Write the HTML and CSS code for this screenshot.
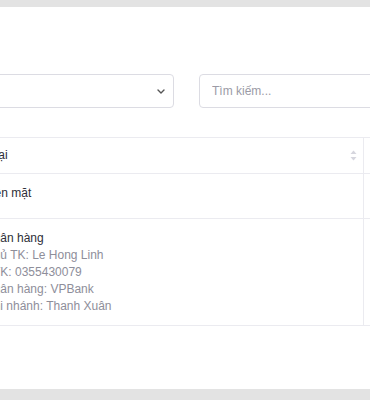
FILE: index.html
```html
<!DOCTYPE html>
<html lang="vi">
<head>
    <meta charset="UTF-8">
    <meta name="viewport" content="width=device-width, initial-scale=1.0">
    <title>Phương thức thanh toán</title>
    <link rel="stylesheet" href="styles.css">
</head>
<body>

  <div class="page">
    <div class="card">

      <div class="filters">
        <div class="select">
          <span class="select-value"></span>
          <svg class="chevron" width="8" height="5" viewBox="0 0 8 5">
            <path d="M1 1l3 3 3-3" fill="none" stroke="#555" stroke-width="1.4" stroke-linecap="round" stroke-linejoin="round"/>
          </svg>
        </div>
        <input class="search" type="text" placeholder="Tìm kiếm...">
      </div>

      <table class="list">
        <thead>
          <tr>
            <th class="col-type">
              <div class="th-inner">
                <span>Loại</span>
                <svg class="sort" width="7" height="11" viewBox="0 0 7 11">
                  <path d="M3.5 0.5L6.5 4H0.5z" fill="#d6d6de"/>
                  <path d="M3.5 10.5L6.5 7H0.5z" fill="#d6d6de"/>
                </svg>
              </div>
            </th>
            <th class="col-rest"></th>
          </tr>
        </thead>
        <tbody>
          <tr class="row-short">
            <td class="col-type"><div class="title">Tiền mặt</div></td>
            <td class="col-rest"></td>
          </tr>
          <tr>
            <td class="col-type">
              <div class="title">Ngân hàng</div>
              <div class="meta">Chủ TK: Le Hong Linh</div>
              <div class="meta">STK: 0355430079</div>
              <div class="meta">Ngân hàng: VPBank</div>
              <div class="meta">Chi nhánh: Thanh Xuân</div>
            </td>
            <td class="col-rest"></td>
          </tr>
        </tbody>
      </table>

    </div>
  </div>

</body>
</html>
```

FILE: styles.css
```css
body, html {
    margin: 0;
    padding: 0;
  }

  body {
    background: #e3e3e3;
    overflow: hidden;
    font-family: "Liberation Sans", Arial, sans-serif;
    font-size: 12px;
    color: #2e2e38;
  }

  .page {
    padding: 7px 0 11px;
  }

  .card {
    background: #fff;
    margin-left: -40px;
    width: 470px;
    height: 382px;
    padding: 67px 0 0 15px;
    box-sizing: border-box;
  }

  .filters {
    display: flex;
    gap: 25px;
  }

  .select {
    width: 199px;
    height: 34px;
    box-sizing: border-box;
    border: 1px solid #dcdce3;
    border-radius: 4px;
    display: flex;
    align-items: center;
    justify-content: flex-end;
    padding-right: 8px;
  }

  .search {
    width: 220px;
    height: 34px;
    box-sizing: border-box;
    border: 1px solid #dcdce3;
    border-radius: 4px;
    padding: 0 12px;
    font-family: inherit;
    font-size: 12px;
    color: #2e2e38;
    outline: none;
  }

  .search::placeholder {
    color: #9b9ba6;
  }

  .list {
    margin-top: 29px;
    border-collapse: collapse;
    width: 440px;
  }

  .list th,
  .list td {
    border-top: 1px solid #ebebf0;
    border-bottom: 1px solid #ebebf0;
    text-align: left;
    vertical-align: top;
    padding: 11px 10px 10px;
    line-height: 17px;
  }

  .list th {
    font-weight: normal;
    height: 36px;
    box-sizing: border-box;
    padding: 0 6px 0 10px;
    vertical-align: middle;
  }

  .list .col-type {
    width: 388px;
    box-sizing: border-box;
    border-right: 1px solid #ebebf0;
  }

  .th-inner {
    display: flex;
    align-items: center;
    justify-content: space-between;
  }

  .row-short td {
    height: 45px;
    box-sizing: border-box;
  }

  .meta {
    color: #8e8e9a;
  }
```
